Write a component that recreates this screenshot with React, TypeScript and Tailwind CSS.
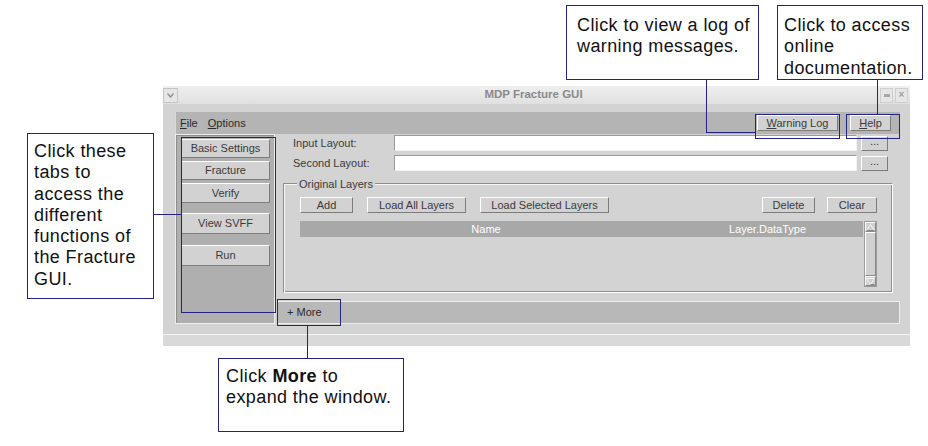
const navy = "border-[#22227f]";

function Bevel({ label, className = "" }: { label: React.ReactNode; className?: string }) {
  return (
    <div
      className={`flex items-center justify-center border border-t-white border-l-white border-r-[#7c7c7c] border-b-[#7c7c7c] bg-[#d2d2d2] text-[11px] leading-none text-[#3a3a3a] ${className}`}
    >
      {label}
    </div>
  );
}

function Field({ label }: { label: string }) {
  return (
    <div className="flex h-[16px] items-center">
      <div className="w-[117px] pl-[16px] text-[11px] text-[#3a3a3a]">{label}</div>
      <div className="h-[16px] w-[463px] border border-t-[#9a9a9a] border-l-[#9a9a9a] border-r-[#f4f4f4] border-b-[#f4f4f4] bg-white" />
      <Bevel label="..." className="ml-[4px] h-[15px] w-[27px] pb-[4px]" />
    </div>
  );
}

function Callout({ className, children }: { className: string; children: React.ReactNode }) {
  return (
    <div className={`absolute border ${navy} bg-white text-[18px] leading-[21.3px] tracking-[0.4px] text-[#111] ${className}`}>
      {children}
    </div>
  );
}

function Arrow({ up }: { up?: boolean }) {
  return (
    <div className="flex h-[10px] items-center justify-center border border-t-white border-l-white border-r-[#8a8a8a] border-b-[#8a8a8a] bg-[#cfcfcf]">
      <svg width="9" height="7" viewBox="0 0 9 7">
        <polygon
          points={up ? "0.5,6.5 4.5,0.5 8.5,6.5" : "0.5,0.5 4.5,6.5 8.5,0.5"}
          fill="none"
          stroke="#f4f4f4"
        />
        <line x1={up ? 0.5 : 4.5} y1="6.5" x2="8.5" y2="6.5" stroke="#8a8a8a" />
      </svg>
    </div>
  );
}

export default function App() {
  return (
    <div className="relative h-[446px] w-[928px] overflow-hidden bg-white pl-[163px] pt-[86px] font-['Liberation_Sans',Arial,sans-serif]">
      {/* window */}
      <div className="flex h-[260px] w-[747px] flex-col bg-[#d3d3d3]">
        {/* title bar */}
        <div className="flex h-[18px] items-center bg-gradient-to-b from-[#efefef] to-[#e0e0e0] pr-[2px]">
          <div className="flex h-[15px] w-[15px] items-center justify-center border border-[#c4c4c4] bg-[#e6e6e6]">
            <svg width="7" height="5" viewBox="0 0 7 5">
              <path d="M0.5 0.5 L3.5 4 L6.5 0.5" fill="none" stroke="#8a8a8a" strokeWidth="1.2" />
            </svg>
          </div>
          <div className="flex-1 pl-[9px] text-center text-[11.5px] font-bold text-[#8a8a8a]">MDP Fracture GUI</div>
          <div className="flex h-[15px] w-[13px] items-center justify-center border border-[#cfcfcf] bg-[#e6e6e6]">
            <div className="h-[3px] w-[6px] bg-[#a8a8a8]" />
          </div>
          <div className="ml-[2px] flex h-[15px] w-[13px] items-center justify-center border border-[#cfcfcf] bg-[#e6e6e6] text-[10px] font-bold leading-none text-[#a0a0a0]">
            ×
          </div>
        </div>

        {/* body */}
        <div className="mt-[8px] flex flex-col pl-[12px] pr-[10px]">
          {/* menu bar */}
          <div className="flex h-[22px] items-center border-l border-[#d9d9d9] bg-[#b4b4b4] pl-[4px] pr-[9px] text-[11px] text-[#2a2a2a]">
            <span>
              <span className="underline">F</span>ile
            </span>
            <span className="ml-[10px]">
              <span className="underline">O</span>ptions
            </span>
            <div className="flex-1" />
            <Bevel label={<span><span className="underline">W</span>arning Log</span>} className="h-[16px] w-[81px] text-[#2a2a2a]" />
            <Bevel label={<span><span className="underline">H</span>elp</span>} className="ml-[12px] h-[16px] w-[41px] text-[#2a2a2a]" />
          </div>

          <div className="flex h-[190px]">
            {/* tabs */}
            <div className="w-[100px] border border-[#eeeeee] bg-[#afafaf] pl-[5px] shadow-[inset_1px_1px_0_#8e8e8e]">
              <Bevel label="Basic Settings" className="mt-[4px] h-[19px] w-[89px]" />
              <Bevel label="Fracture" className="mt-[3px] h-[19px] w-[89px]" />
              <Bevel label="Verify" className="mt-[3px] h-[20px] w-[89px]" />
              <Bevel label="View SVFF" className="mt-[10px] h-[21px] w-[89px]" />
              <Bevel label="Run" className="mt-[11px] h-[21px] w-[89px]" />
            </div>

            {/* main */}
            <div className="ml-[2px] flex flex-1 flex-col">
              <div className="mt-[1px]">
                <Field label="Input Layout:" />
              </div>
              <div className="mt-[4px]">
                <Field label="Second Layout:" />
              </div>

              <div className="relative ml-[6px] mt-[12px] h-[110px] w-[610px] border border-t-[#8e8e8e] border-l-[#8e8e8e] border-r-white border-b-white shadow-[inset_1px_1px_0_#f6f6f6,inset_-1px_-1px_0_#8e8e8e]">
                <div className="absolute left-[13px] top-[-8px] bg-[#d3d3d3] px-[2px] text-[11px] text-[#3a3a3a]">Original Layers</div>
                <div className="flex pl-[16px] pr-[15px] pt-[13px]">
                  <Bevel label="Add" className="h-[16px] w-[53px]" />
                  <Bevel label="Load All Layers" className="ml-[14px] h-[16px] w-[99px]" />
                  <Bevel label="Load Selected Layers" className="ml-[14px] h-[16px] w-[129px]" />
                  <div className="flex-1" />
                  <Bevel label="Delete" className="h-[16px] w-[53px]" />
                  <Bevel label="Clear" className="ml-[12px] h-[16px] w-[50px]" />
                </div>
                <div className="ml-[16px] mt-[8px] flex h-[66px] w-[577px]">
                  <div className="flex-1">
                    <div className="flex h-[16px] items-center bg-[#a8a8a8] text-[11px] text-white">
                      <div className="w-[372px] text-center">Name</div>
                      <div className="flex-1 text-center">Layer.DataType</div>
                    </div>
                  </div>
                  <div className="ml-[1px] flex w-[13px] flex-col border border-[#9a9a9a] bg-[#c4c4c4]">
                    <Arrow up />
                    <div className="flex-1 border border-t-white border-l-white border-r-[#8a8a8a] border-b-[#8a8a8a] bg-[#d0d0d0]" />
                    <Arrow />
                  </div>
                </div>
              </div>

              <div className="mt-[8px] flex h-[23px] items-center border border-[#ececec] bg-[#b8b8b8] pl-[9px] text-[11px] text-[#2a2a2a]">
                + More
              </div>
            </div>
          </div>
        </div>

        <div className="h-[10px]" />
        <div className="h-[1px] bg-[#f4f4f4]" />
        <div className="flex-1 bg-[#d9d9d9]" />
      </div>

      {/* highlight frames */}
      <div className={`absolute left-[181px] top-[137px] h-[176px] w-[95px] border ${navy}`} />
      <div className={`absolute left-[755px] top-[114px] h-[25px] w-[85px] border ${navy}`} />
      <div className={`absolute left-[846px] top-[114px] h-[25px] w-[54px] border ${navy}`} />
      <div className={`absolute left-[277px] top-[299px] h-[27px] w-[64px] border ${navy}`} />

      {/* leader lines */}
      <div className="absolute left-[153px] top-[214px] h-[1px] w-[28px] bg-[#22227f]" />
      <div className="absolute left-[706px] top-[79px] h-[54px] w-[1px] bg-[#22227f]" />
      <div className="absolute left-[706px] top-[132px] h-[1px] w-[49px] bg-[#22227f]" />
      <div className="absolute left-[877px] top-[79px] h-[35px] w-[1px] bg-[#22227f]" />
      <div className="absolute left-[307px] top-[326px] h-[32px] w-[1px] bg-[#22227f]" />

      {/* callouts */}
      <Callout className="left-[27px] top-[133px] h-[166px] w-[127px] pl-[6px] pt-[7px]">
        Click these tabs to access the different functions of the Fracture GUI.
      </Callout>
      <Callout className="left-[566px] top-[5px] h-[75px] w-[193px] pl-[10px] pt-[9px]">
        Click to view a log of
        <br />
        warning messages.
      </Callout>
      <Callout className="left-[777px] top-[5px] h-[75px] w-[146px] pl-[6px] pt-[9px]">
        Click to access
        <br />
        online
        <br />
        documentation.
      </Callout>
      <Callout className="left-[218px] top-[358px] h-[74px] w-[186px] pl-[7px] pt-[7px]">
        Click <b>More</b> to
        <br />
        expand the window.
      </Callout>
    </div>
  );
}
